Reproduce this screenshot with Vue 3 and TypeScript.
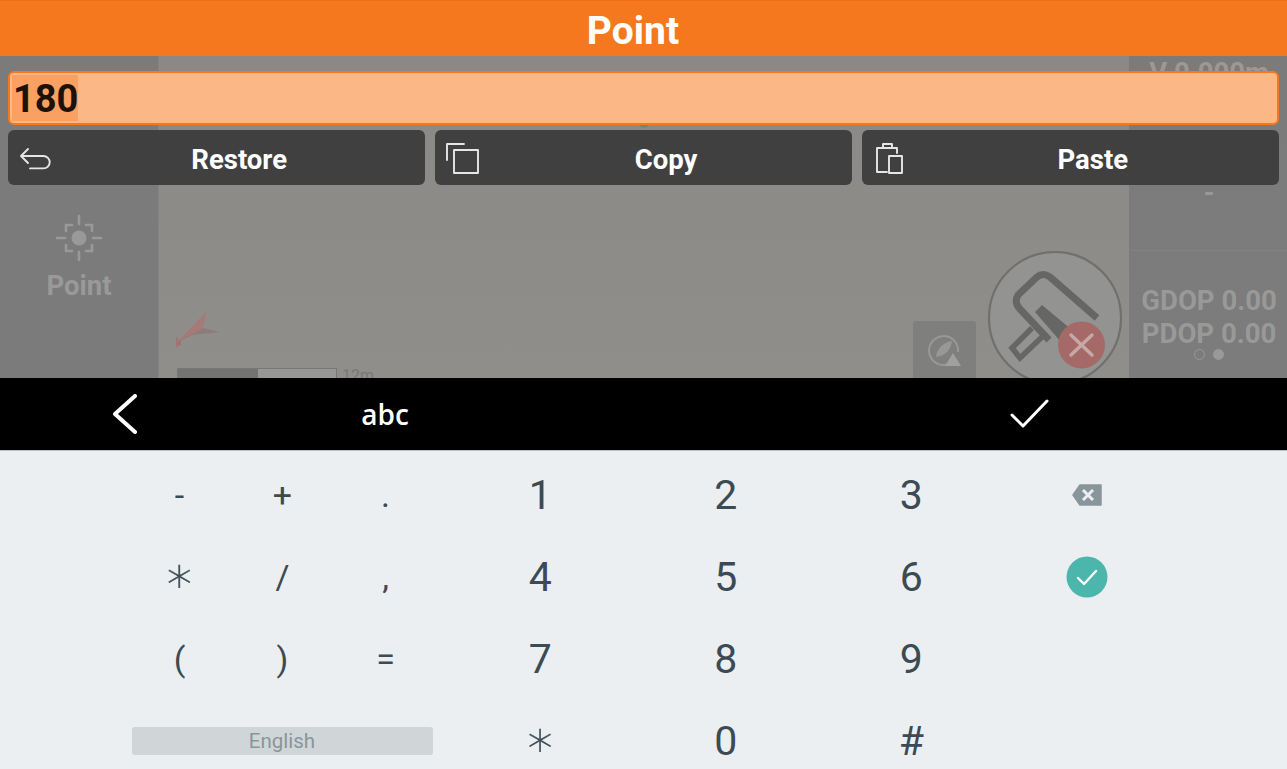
<template>
  <div class="screen">
    <header class="title-bar">Point</header>

    <section class="stage">
      <aside class="side-left">
        <svg class="target" width="50" height="50" viewBox="0 0 50 50">
          <circle cx="25" cy="25" r="7.5" fill="#999" />
          <path d="M25 3v8M25 39v8M3 25h8M39 25h8M12 18v-6h6M32 12h6v6M38 32v6h-6M18 38h-6v-6" fill="none" stroke="#999" stroke-width="2.6" stroke-linecap="round" />
        </svg>
        <div class="side-label">Point</div>
      </aside>

      <main class="map">
        <span class="marker"></span>
        <svg class="arrow" width="50" height="42" viewBox="0 0 50 42">
          <path d="M3 36 32 6 29 22 18 29Z" fill="#a57a78" />
          <path d="M3 36 29 22 46 26 18 29Z" fill="#8f7b7a" />
          <path d="M3 31v9l3-5v5" fill="none" stroke="#a56a68" stroke-width="1.2" />
        </svg>
        <div class="scale">
          <div class="scale-bar"><span class="scale-fill"></span></div>
          <span class="scale-text">12m</span>
        </div>
        <div class="compass">
          <svg width="36" height="36" viewBox="0 0 36 36">
            <path d="M24 31A14.5 14.5 0 1 1 31 20" fill="none" stroke="#989896" stroke-width="2" />
            <path d="M9 25C10 16 17 10 25 9 24 17 19 24 9 25Z" fill="#989896" />
            <path d="M26 21 34 34H18Z" fill="#a0a09e" />
          </svg>
        </div>
        <svg class="brush" width="138" height="136" viewBox="0 0 138 136">
          <circle cx="69" cy="68" r="66" fill="#939391" stroke="#70706f" stroke-width="2.2" />
          <path d="M111 68 64 27Q57 22 51 27L32 45Q28 52 33 58L63 90" fill="none" stroke="#666665" stroke-width="7" stroke-linejoin="round" />
          <path d="M49 62 56 55 86 80 75 92Z" fill="#666665" />
          <path d="M46 78 26 98 34 108 56 87" fill="none" stroke="#666665" stroke-width="5.5" />
          <circle cx="95.5" cy="95" r="23.5" fill="#a56a68" />
          <path d="M85 85 106 105M106 85 85 105" stroke="#c6a8a6" stroke-width="3.4" stroke-linecap="round" />
        </svg>
      </main>

      <aside class="side-right">
        <div class="v-text">V 0.000m</div>
        <div class="dash">-</div>
        <div class="dop">
          <div>GDOP 0.00</div>
          <div>PDOP 0.00</div>
          <div class="dots"><i class="dot"></i><i class="dot on"></i></div>
        </div>
      </aside>

      <div class="edit-panel">
        <div class="field"><span class="selected">180</span></div>
        <div class="actions">
          <button v-for="a in actions" :key="a.label" class="action" type="button">
            <svg class="action-icon" width="45" height="54" viewBox="0 0 45 54">
              <path :d="a.icon" fill="none" stroke="#e6e6e6" stroke-width="1.9" stroke-linejoin="round" stroke-linecap="round" />
            </svg>
            <span class="action-label">{{ a.label }}</span>
          </button>
        </div>
      </div>
    </section>

    <nav class="key-bar">
      <svg class="bar-back" width="26" height="40" viewBox="0 0 26 40">
        <path d="M23 2 3 20 23 38" fill="none" stroke="#fff" stroke-width="4" stroke-linecap="round" stroke-linejoin="round" />
      </svg>
      <span class="bar-abc">abc</span>
      <svg class="bar-ok" width="40" height="30" viewBox="0 0 40 30">
        <path d="M2 16 13 27 37 2" fill="none" stroke="#fff" stroke-width="3" stroke-linecap="round" stroke-linejoin="round" />
      </svg>
    </nav>

    <section class="keyboard">
      <div class="symbols">
        <span v-for="s in symbols" :key="s.id" class="sym" :class="s.cls">{{ s.ch }}</span>
        <div class="lang">English</div>
      </div>
      <div class="digits">
        <span v-for="d in digits" :key="d.id" class="dig" :class="d.cls">{{ d.ch }}</span>
      </div>
      <div class="controls">
        <div class="ctrl">
          <svg width="30" height="24" viewBox="0 0 30 24">
            <path d="M1 12 8 2H29V22H8Z" fill="#88959b" stroke="#88959b" stroke-width="1.5" stroke-linejoin="round" />
            <path d="M11 7 21 17M21 7 11 17" stroke="#ebeff2" stroke-width="3" />
          </svg>
        </div>
        <div class="ctrl">
          <svg width="42" height="42" viewBox="0 0 42 42">
            <circle cx="21" cy="21" r="20.5" fill="#4db6ac" />
            <path d="M12 22 18 28 30 15" fill="none" stroke="#fff" stroke-width="2.4" stroke-linecap="round" stroke-linejoin="round" />
          </svg>
        </div>
      </div>
    </section>
  </div>
</template>

<script setup lang="ts">
interface Key {
  id: string
  ch: string
  cls?: string
}

const actions = [
  { label: 'Restore', icon: 'M20 18 13 25 20 32M13 25H35.5a6.2 6.2 0 0 1 0 12.4H22' },
  { label: 'Copy', icon: 'M12 29V13H29M19 19H43V42H19Z' },
  { label: 'Paste', icon: 'M21 17H15V41H25M35 22V17H30M21 13H30V17H21ZM27 25H40V42H27Z' },
]

const symbols: Key[] = ['-', '+', '.', '∗', '/', ',', '(', ')', '='].map((ch, i) => ({
  id: 's' + i,
  ch,
  cls: ch === '∗' ? 'star' : '',
}))

const digits: Key[] = ['1', '2', '3', '4', '5', '6', '7', '8', '9', '∗', '0', '#'].map((ch, i) => ({
  id: 'd' + i,
  ch,
  cls: ch === '∗' ? 'star' : '',
}))
</script>

<style>
html, body { margin: 0; overflow: hidden; }
</style>

<style scoped>
.screen {
  width: 1287px; height: 769px; overflow: hidden;
  display: flex; flex-direction: column;
  font-family: Roboto, "Liberation Sans", sans-serif;
  background: #ebeff2;
}
.title-bar {
  height: 56px; box-sizing: border-box; flex: none;
  background: #f5781f; border-top: 1px solid #ee6f14;
  color: #fff; font-size: 39px; font-weight: 700; line-height: 60px; text-align: center;
  padding-right: 21px;
}
.stage {
  position: relative; flex: none; height: 322px; overflow: hidden;
  display: grid; grid-template-columns: 159px 1fr 158px;
}
.side-left {
  background: #7b7b7b; border-right: 1px solid #838382;
  display: flex; flex-direction: column; align-items: center;
  padding-top: 157px; color: #999;
}
.target { display: block; }
.side-label { font-size: 27.5px; font-weight: 700; line-height: 32px; margin-top: 7px; }
.map {
  position: relative;
  background: linear-gradient(#8a8987, #8f8e8b);
}
.marker {
  position: absolute; left: 479px; top: 60px; width: 12px; height: 12px;
  border-radius: 50%; background: #6f8a78;
}
.arrow { position: absolute; left: 15px; top: 250px; }
.scale { position: absolute; left: 18px; top: 312px; display: flex; align-items: flex-start; gap: 5px; }
.scale-bar {
  width: 160px; height: 20px; box-sizing: border-box;
  border: 1px solid #777; background: #979795;
}
.scale-fill { display: block; width: 80px; height: 100%; background: #737372; }
.scale-text { font-size: 16px; line-height: 18px; color: #777; margin-top: -1px; }
.compass {
  position: absolute; left: 754px; top: 265px; width: 63px; height: 70px;
  background: #7f7f7e; border-radius: 3px;
  display: flex; justify-content: center; padding-top: 11px; box-sizing: border-box;
}
.brush { position: absolute; left: 827px; top: 194px; }
.side-right {
  position: relative;
  background: linear-gradient(#7b7b7b, #7c7c7c);
  display: flex; flex-direction: column; align-items: center;
  color: #999; font-weight: 700; padding-left: 2px;
}
.v-text { font-size: 27.5px; line-height: 32px; margin-top: 1px; height: 120px; }
.dash { font-size: 27px; line-height: 32px; height: 73px; }
.dop {
  align-self: stretch; border-top: 1px solid #828282; flex: 1;
  padding-top: 33px; box-sizing: border-box;
  font-size: 27.5px; line-height: 33px; text-align: center; white-space: nowrap;
}
.dots { display: flex; justify-content: center; align-items: center; gap: 7.5px; margin-top: -1px; }
.dot { width: 11px; height: 11px; border: 1.5px solid #999; border-radius: 50%; box-sizing: border-box; }
.dot.on { background: #999; }
.edit-panel {
  position: absolute; left: 8px; right: 8px; top: 15px;
  display: flex; flex-direction: column; gap: 5px;
}
.field {
  height: 54px; box-sizing: border-box;
  background: #fbb786; border: 2px solid #f5781f; border-radius: 6px;
  padding: 2px 0 0 2px;
}
.selected {
  display: inline-block; height: 46px; width: 66px; padding-left: 1px; box-sizing: border-box;
  background: #faa062; color: #1c1208;
  font-size: 38px; font-weight: 700; line-height: 48px;
}
.actions { display: grid; grid-template-columns: repeat(3, 1fr); column-gap: 9.5px; }
.action {
  height: 55px; padding: 0; border: 0; border-radius: 6px;
  background: #404040; color: #fff; font-family: inherit;
  display: flex; align-items: center;
}
.action-icon { flex: none; display: block; }
.action-label { flex: 1; text-align: center; font-size: 27.5px; font-weight: 700; line-height: 55px; padding-top: 3px; }
.key-bar {
  position: relative; flex: none; height: 72px; background: #000;
  display: grid; grid-template-columns: 112px 26px 220px 54px 1fr;
  align-items: center;
}
.bar-back { grid-column: 2; display: block; }
.bar-abc {
  grid-column: 4; color: #fff; font-size: 28px; line-height: 72px; text-align: center;
  font-family: "Open Sans", sans-serif; font-weight: 600;
}
.bar-ok { grid-column: 5; margin-left: 598px; display: block; }
.keyboard {
  flex: 1; box-sizing: border-box; padding: 3px 0 0 128px;
  display: grid; grid-template-columns: 309px 566.5px 166px;
  background: #ebeff2; border-top: 1px solid #bcbfc1; color: #3b4a53;
}
.symbols { display: grid; grid-template-columns: repeat(3, 103px); grid-auto-rows: 82px; }
.sym { display: flex; align-items: center; justify-content: center; font-size: 34px; }
.lang {
  grid-column: 1 / -1; align-self: center; justify-self: center;
  margin-left: -1px;
  width: 301px; height: 28px; background: #d0d5d8; border-radius: 3px;
  text-align: center; font-size: 20.5px; line-height: 28px; color: #8a959b;
}
.digits {
  display: grid; grid-template-columns: repeat(3, 185.5px); grid-auto-rows: 82px;
  margin-left: 10.5px;
}
.dig { display: flex; align-items: center; justify-content: center; font-size: 41px; }
.sym.star, .dig.star {
  font-family: "DejaVu Sans", sans-serif; font-weight: 300; font-size: 50px;
  -webkit-text-stroke: 0.5px #3b4a53; padding-bottom: 4px;
}
.controls { display: grid; grid-auto-rows: 82px; width: 166px; }
.ctrl { display: flex; align-items: center; justify-content: center; }
.ctrl svg { display: block; }
</style>
